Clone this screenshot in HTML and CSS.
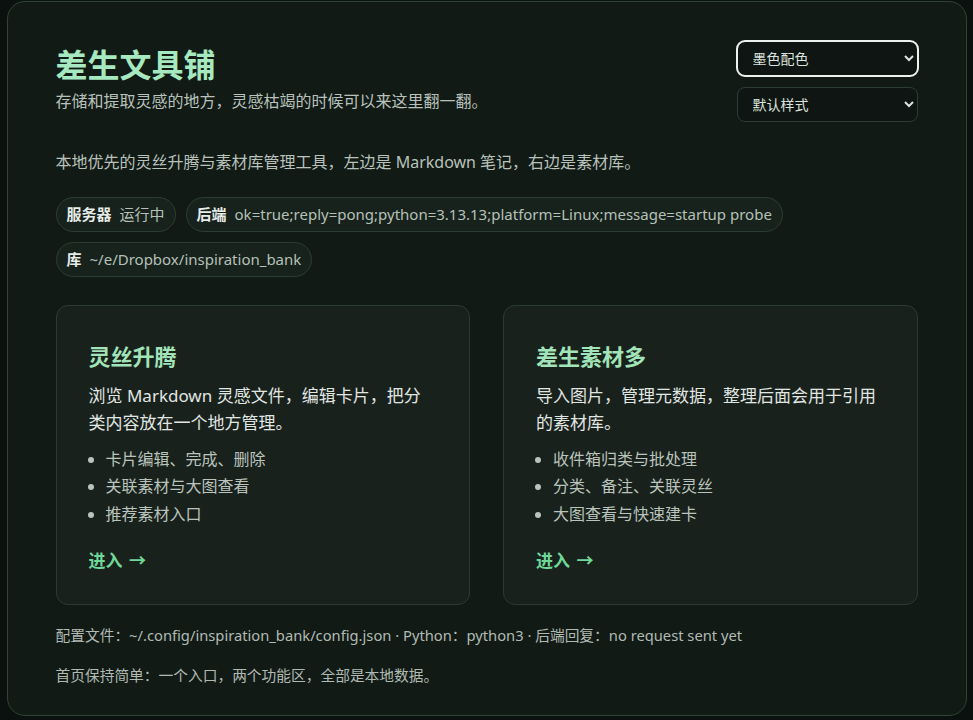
FILE: index.html
```html
<!DOCTYPE html>
<html lang="zh-CN">
<head>
<meta charset="UTF-8">
<meta name="viewport" content="width=device-width, initial-scale=1.0">
<title>差生文具铺</title>
<link rel="stylesheet" href="styles.css">
</head>
<body>
<main class="shell">
  <header class="top">
    <div class="brand">
      <h1>差生文具铺</h1>
      <p class="tagline">存储和提取灵感的地方，灵感枯竭的时候可以来这里翻一翻。</p>
    </div>
    <div class="switches">
      <select class="picker picker-focus">
        <option>墨色配色</option>
        <option>纸白配色</option>
      </select>
      <select class="picker">
        <option>默认样式</option>
        <option>紧凑样式</option>
      </select>
    </div>
  </header>

  <p class="intro">本地优先的灵丝升腾与素材库管理工具，左边是 Markdown 笔记，右边是素材库。</p>

  <div class="pills">
    <span class="pill"><b>服务器</b><span>运行中</span></span>
    <span class="pill"><b>后端</b><span>ok=true;reply=pong;python=3.13.13;platform=Linux;message=startup probe</span></span>
    <span class="pill"><b>库</b><span>~/e/Dropbox/inspiration_bank</span></span>
  </div>

  <section class="cards">
    <div class="card">
      <h2>灵丝升腾</h2>
      <p>浏览 Markdown 灵感文件，编辑卡片，把分类内容放在一个地方管理。</p>
      <ul>
        <li>卡片编辑、完成、删除</li>
        <li>关联素材与大图查看</li>
        <li>推荐素材入口</li>
      </ul>
      <a class="enter" href="#">进入 →</a>
    </div>
    <div class="card">
      <h2>差生素材多</h2>
      <p>导入图片，管理元数据，整理后面会用于引用的素材库。</p>
      <ul>
        <li>收件箱归类与批处理</li>
        <li>分类、备注、关联灵丝</li>
        <li>大图查看与快速建卡</li>
      </ul>
      <a class="enter" href="#">进入 →</a>
    </div>
  </section>

  <footer class="foot">
    <p>配置文件：~/.config/inspiration_bank/config.json · Python：python3 · 后端回复：no request sent yet</p>
    <p>首页保持简单：一个入口，两个功能区，全部是本地数据。</p>
  </footer>
</main>
</body>
</html>
```

FILE: styles.css
```css
html { background: #0b110e; color-scheme: dark; }
body { margin: 0; padding: 1px 0 4px; font-family: "Noto Sans", "Noto Sans CJK SC", sans-serif; color: #d8dfda; line-height: 1.6; }

.shell { width: 960px; box-sizing: border-box; margin: 0 auto; padding: 39px 48px 28px; background: #121a16; border: 1px solid #2e4536; border-radius: 18px; }

.top { display: flex; justify-content: space-between; align-items: flex-start; }
h1 { margin: 0; font-size: 32px; line-height: 48px; font-weight: 700; color: #a6e8bf; }
.tagline { margin: 0; font-size: 16px; color: #b8c2bb; }
.switches { display: flex; flex-direction: column; gap: 11px; }
.picker { width: 181px; height: 35px; padding: 0 8px 0 11px; font: 14px "Noto Sans", "Noto Sans CJK SC", sans-serif; color: #dce3de; background: #0f1512; border: 1px solid #2c3d31; border-radius: 8px; }
.picker-focus { outline: 2px solid #eef2ef; outline-offset: -1px; }

.intro { margin: 28px 0 0; font-size: 16px; color: #b8c2bb; }

.pills { display: flex; flex-wrap: wrap; gap: 10px; margin-top: 21px; }
.pill { display: inline-flex; gap: 8px; padding: 5px 10px; font-size: 15px; line-height: 23px; background: #18221c; border: 1px solid #2c3d31; border-radius: 999px; color: #b5c0b8; }
.pill b { color: #e6ece8; }

.cards { display: grid; grid-template-columns: 1fr 1fr; gap: 33px; margin-top: 28px; }
.card { padding: 36px 32px 29px; background: #19211c; border: 1px solid #2c3b30; border-radius: 12px; }
.card h2 { margin: 0; font-size: 22px; line-height: 28px; color: #a2e4b9; }
.card p { margin: 12px 0 0; font-size: 17px; line-height: 27px; color: #e0e6e2; }
.card ul { margin: 10px 0 0; padding-left: 17px; }
.card li { font-size: 16px; line-height: 27.5px; color: #b9c4bd; }
.enter { display: inline-block; margin-top: 19px; font-size: 17px; line-height: 27px; font-weight: 700; color: #6fd898; text-decoration: none; word-spacing: 2px; }

.foot { margin-top: 19px; font-size: 14.72px; line-height: 23px; color: #b0bab3; }
.foot p { margin: 0 0 17px; }
.foot p:last-child { margin-bottom: 0; }
```
